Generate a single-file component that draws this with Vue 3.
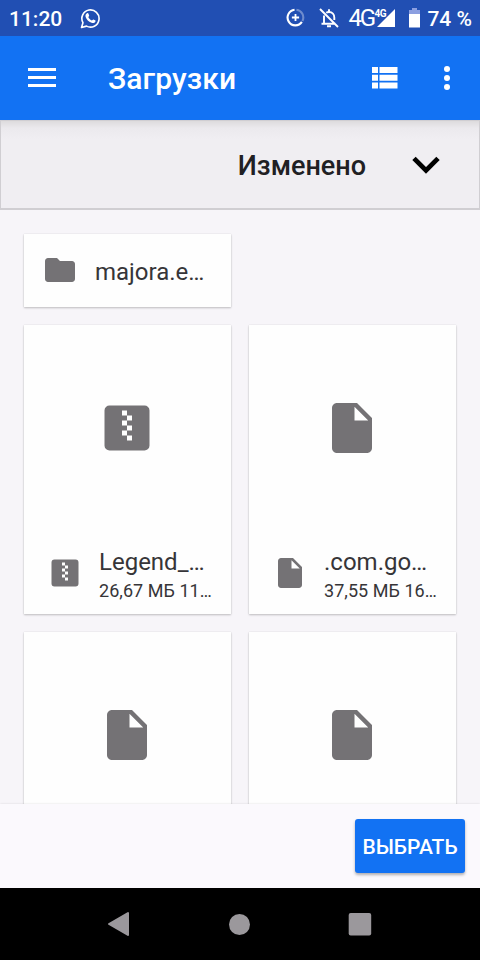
<script setup>
const filePath =
  'M6 2c-1.1 0-1.99.9-1.99 2L4 20c0 1.1.89 2 1.99 2H18c1.1 0 2-.9 2-2V8l-6-6H6zm7 7V3.5L18.5 9H13z'
const zipPath =
  'M5 3h14a2 2 0 0 1 2 2v14a2 2 0 0 1-2 2H5a2 2 0 0 1-2-2V5a2 2 0 0 1 2-2zM10 5v2h2v2h-2v2h2v2h-2v2h2v2h2v-2h-2v-2h2v-2h-2V9h2V7h-2V5z'

const files = [
  { name: 'Legend_…', meta: '26,67 МБ 11…', icon: zipPath },
  { name: '.com.go…', meta: '37,55 МБ 16…', icon: filePath },
  { name: '', meta: '', icon: filePath },
  { name: '', meta: '', icon: filePath },
]
</script>

<template>
  <div class="screen">
    <header class="status">
      <span class="clock">11:20</span>
      <svg class="whatsapp" viewBox="0 0 22 22">
        <path d="M1.6 20.4l1.5-5A9 9 0 1 1 6.800 19z" fill="none" stroke="#fff" stroke-width="1.7" stroke-linejoin="round" />
        <path d="M7.300 5.600c.8-.5 1.300-.2 1.600.5l.7 1.700c.2.600-.6 1.200-.9 1.600.8 1.700 2 2.900 3.800 3.700.5-.4 1-1.400 1.600-1.100l1.700.8c.8.4.5 1.300.1 1.900-.8 1.200-2.400 1.300-3.800.8-3.300-1.100-5.200-3.200-6.200-6-.5-1.600.1-3.100 1.400-3.900z" fill="#fff" />
      </svg>
      <span class="spacer"></span>
      <svg class="saver" viewBox="0 0 20 20" fill="none" stroke="#fff">
        <path d="M11 1.900a8.200 8.200 0 0 1 6.300 11.800" stroke-width="2.200" opacity=".35" />
        <path d="M9 1.900a8.200 8.200 0 1 0 7.700 12.700" stroke-width="2.200" />
        <path d="M10 6.200v7.600M6.200 10h7.600" stroke-width="1.900" />
      </svg>
      <svg class="bell" viewBox="0 0 20 20" fill="none" stroke="#fff" stroke-width="1.900">
        <path d="M5 7.500V15.500M15.300 12V9.500c0-3-2-5.500-5.300-5.500-1.200 0-2 .3-2.800.8" />
        <path d="M2.500 15.800h14M10 4V1.200M8 18.300h4M1 1l18 18" />
      </svg>
      <span class="net">4G</span>
      <span class="signal">
        <svg viewBox="0 0 18 18"><path d="M18 0v18H0z" fill="#fff" /></svg>
        <span class="net-small">4G</span>
      </span>
      <svg class="battery" viewBox="0 0 11 20">
        <path d="M3 0h5v2h3v5H0V2h3z" fill="#8c9fe0" />
        <path d="M0 6h11v13.500H0z" fill="#fff" />
      </svg>
      <span class="percent">74 %</span>
    </header>

    <div class="appbar">
      <svg class="menu" viewBox="0 0 28 20"><path d="M0 0h28v3H0zM0 8h28v3H0zM0 16h28v3H0z" fill="#fff" /></svg>
      <h1 class="title">Загрузки</h1>
      <svg class="list" viewBox="0 0 26 22">
        <path d="M0 0h6v6H0zM7.500 0h18v6h-18zM0 7.700h6v6H0zM7.500 7.700h18v6h-18zM0 15.500h6v6H0zM7.500 15.500h18v6h-18z" fill="#fff" />
      </svg>
      <svg class="more" viewBox="0 0 6 24" fill="#fff">
        <circle cx="3" cy="3" r="3" /><circle cx="3" cy="12" r="3" /><circle cx="3" cy="21" r="3" />
      </svg>
    </div>

    <div class="sort">
      <span class="sort-label">Изменено</span>
      <svg class="chevron" viewBox="0 0 28 18"><path d="M2 2.400l12 12 12-12" fill="none" stroke="#000" stroke-width="4.800" /></svg>
    </div>

    <main class="content">
      <div class="grid">
        <div class="card folder">
          <svg class="icon" viewBox="0 0 24 24">
            <path d="M10 4H4c-1.100 0-1.990.9-1.990 2L2 18c0 1.100.9 2 2 2h16c1.100 0 2-.9 2-2V8c0-1.100-.9-2-2-2h-8l-2-2z" fill="#747275" />
          </svg>
          <span class="name">majora.e…</span>
        </div>
      </div>
      <div class="grid">
        <div v-for="(file, i) in files" :key="i" class="card file">
          <div class="preview">
            <svg class="big" viewBox="0 0 24 24"><path :d="file.icon" fill="#747275" fill-rule="evenodd" /></svg>
          </div>
          <div v-if="file.name" class="info">
            <svg class="icon" viewBox="0 0 24 24"><path :d="file.icon" fill="#747275" fill-rule="evenodd" /></svg>
            <div class="texts">
              <div class="name">{{ file.name }}</div>
              <div class="meta">{{ file.meta }}</div>
            </div>
          </div>
        </div>
      </div>
    </main>

    <footer class="actions">
      <button class="select">ВЫБРАТЬ</button>
    </footer>

    <nav class="nav">
      <svg viewBox="0 0 24 26"><path d="M21 2v22L2 13z" fill="#9b989c" stroke="#9b989c" stroke-width="2" stroke-linejoin="round" /></svg>
      <svg viewBox="0 0 24 26"><circle cx="11.500" cy="13.500" r="10.500" fill="#9b989c" /></svg>
      <svg viewBox="0 0 24 26"><rect x="0.700" y="2" width="22.500" height="22.500" rx="2" fill="#9b989c" /></svg>
    </nav>
  </div>
</template>

<style>
body {
  margin: 0;
}
</style>

<style scoped>
.screen {
  width: 480px;
  height: 960px;
  display: flex;
  flex-direction: column;
  overflow: hidden;
  background: #f7f5f9;
  font-family: Roboto, "Noto Sans", sans-serif;
}
svg {
  display: block;
  flex: none;
}
.status {
  height: 36px;
  flex: none;
  box-sizing: border-box;
  padding: 0 8px 0 9px;
  display: flex;
  align-items: center;
  background: #214fb3;
  color: #fff;
  font-size: 21px;
  font-weight: 500;
  white-space: nowrap;
}
.clock {
  width: 71px;
  padding-top: 1px;
}
.whatsapp {
  width: 21px;
  height: 21px;
}
.spacer {
  flex: 1;
}
.saver {
  width: 19px;
  height: 19px;
  margin: 0 14px 1px 0;
}
.bell {
  width: 20px;
  height: 20px;
  margin-right: 9px;
}
.net {
  width: 26px;
  font-size: 24px;
  line-height: 28px;
  font-weight: 400;
  letter-spacing: -2.2px;
}
.signal {
  position: relative;
  width: 22px;
  margin-right: 13px;
}
.signal svg {
  width: 18px;
  height: 18px;
  margin-left: 3px;
}
.net-small {
  position: absolute;
  left: 0;
  top: -1px;
  font-size: 10px;
  line-height: 11px;
  font-weight: 700;
  letter-spacing: -0.5px;
}
.battery {
  width: 11px;
  height: 20px;
  margin: 0 7px 1px 0;
}
.percent {
  padding-top: 1px;
}
.appbar {
  height: 84px;
  flex: none;
  box-sizing: border-box;
  padding: 0 30px 0 28px;
  display: flex;
  align-items: center;
  background: #1272f3;
  color: #fff;
}
.menu {
  width: 28px;
  height: 20px;
}
.title {
  flex: 1;
  margin: 2px 0 0 52px;
  font-size: 30px;
  line-height: 36px;
  font-weight: 500;
  letter-spacing: 0.1px;
}
.list {
  width: 26px;
  height: 22px;
  margin-right: 46px;
}
.more {
  width: 6px;
  height: 24px;
}
.sort {
  height: 90px;
  flex: none;
  box-sizing: border-box;
  padding: 0 39px 0 0;
  display: flex;
  align-items: center;
  justify-content: flex-end;
  border: 1px solid #d0ced2;
  border-bottom-width: 2px;
  background: linear-gradient(#dddbdd, #ebe9ed 7px, #f0eef2 18px);
}
.sort-label {
  margin-right: 46px;
  padding-top: 2px;
  font-size: 27px;
  line-height: 32px;
  font-weight: 500;
  color: #212023;
}
.chevron {
  width: 28px;
  height: 18px;
}
.content {
  flex: 1;
  min-height: 0;
  overflow: hidden;
  padding: 24px 24px 0;
  display: flex;
  flex-direction: column;
  gap: 18px;
}
.grid {
  flex: none;
  display: grid;
  grid-template-columns: 207px 207px;
  gap: 18px;
}
.card {
  box-sizing: border-box;
  background: #fefefe;
  box-shadow: 0 1px 2px rgba(0, 0, 0, 0.22), 0 0 1px rgba(0, 0, 0, 0.12);
}
.folder {
  height: 73px;
  padding: 0 18px 1px;
  display: flex;
  align-items: center;
  gap: 17px;
}
.folder .name {
  padding-top: 4px;
}
.file {
  height: 289px;
}
.preview {
  height: 206px;
  display: flex;
  align-items: center;
  padding-left: 73px;
}
.big {
  width: 60px;
  height: 60px;
}
.icon {
  width: 36px;
  height: 36px;
}
.info {
  padding: 17px 0 0 23px;
  display: flex;
  align-items: flex-start;
  gap: 16px;
}
.info .icon {
  margin-top: 7px;
}
.name {
  font-size: 24px;
  line-height: 28px;
  color: #363538;
  white-space: nowrap;
}
.meta {
  margin-top: 4px;
  font-size: 18px;
  line-height: 22px;
  letter-spacing: 0.05px;
  color: #363538;
  white-space: nowrap;
}
.actions {
  height: 84px;
  flex: none;
  box-sizing: border-box;
  padding: 0 15px;
  display: flex;
  align-items: center;
  justify-content: flex-end;
  position: relative;
  background: #fbf9fd;
  box-shadow: 0 0 2px rgba(0, 0, 0, 0.12);
}
.select {
  width: 110px;
  height: 54px;
  padding: 2px 0 0;
  border: 0;
  border-radius: 3px;
  background: #1272f3;
  box-shadow: 0 2px 3px rgba(0, 0, 0, 0.3);
  color: #fff;
  font-family: inherit;
  font-size: 21px;
  font-weight: 500;
  white-space: nowrap;
}
.nav {
  height: 72px;
  flex: none;
  box-sizing: border-box;
  padding: 0 108px 0 107px;
  display: flex;
  align-items: center;
  justify-content: space-between;
  position: relative;
  background: #000;
}
.nav svg {
  width: 24px;
  height: 26px;
}
</style>
